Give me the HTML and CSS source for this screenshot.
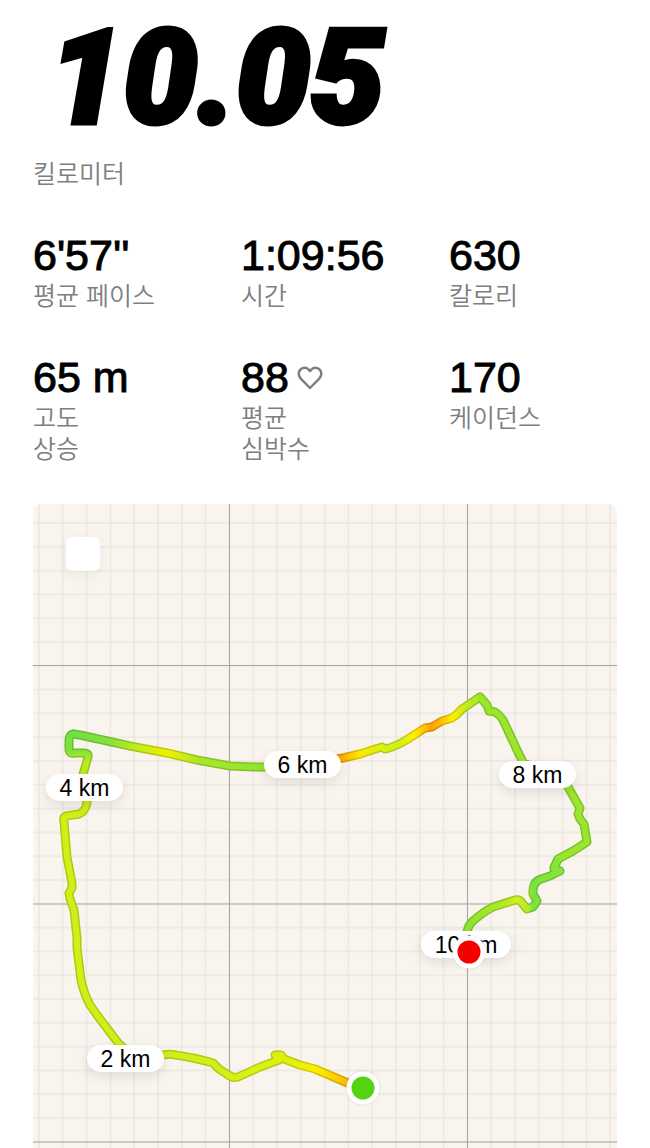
FILE: index.html
```html
<!DOCTYPE html>
<html lang="ko">

<head>
  <meta charset="UTF-8" />
  <meta name="viewport" content="width=device-width, initial-scale=1.0" />
  <title>러닝 기록</title>
  <link rel="stylesheet" href="styles.css">
</head>

<body>
  <main class="run">
    <h1 class="distance">10.05</h1>
    <p class="label">킬로미터</p>

    <dl class="stats">
      <div class="stat">
        <dd class="value">6'57''</dd>
        <dt class="label">평균 페이스</dt>
      </div>
      <div class="stat">
        <dd class="value">1:09:56</dd>
        <dt class="label">시간</dt>
      </div>
      <div class="stat">
        <dd class="value">630</dd>
        <dt class="label">칼로리</dt>
      </div>
      <div class="stat">
        <dd class="value">65 m</dd>
        <dt class="label">고도<br>상승</dt>
      </div>
      <div class="stat">
        <dd class="value">88
          <svg class="heart" viewBox="0 0 26 24" aria-hidden="true">
            <path d="M13 22 L4 12.800 C1 9.800 1 5.800 3.500 3.500 C6 1.200 9.500 1.300 11.500 3.500 L13 5 L14.500 3.500 C16.500 1.300 20 1.200 22.500 3.500 C25 5.800 25 9.800 22 12.800 Z" />
          </svg>
        </dd>
        <dt class="label">평균<br>심박수</dt>
      </div>
      <div class="stat">
        <dd class="value">170</dd>
        <dt class="label">케이던스</dt>
      </div>
    </dl>

    <section class="map">
      <button class="map-button" type="button" aria-label="지도"></button>

      <svg class="map-canvas" viewBox="33 504 584 644">
        <defs>
          <pattern id="minor" x="217.500" y="653.900" width="23.800" height="23.800" patternUnits="userSpaceOnUse">
            <path class="grid-minor" d="M0 11.900H23.800M11.900 0V23.800" />
          </pattern>
          <linearGradient id="pace-start" gradientUnits="userSpaceOnUse" x1="230" y1="0" x2="350" y2="0">
            <stop offset="0" stop-color="#d4f016" />
            <stop offset="0.450" stop-color="#dcf010" />
            <stop offset="0.730" stop-color="#fbee00" />
            <stop offset="1" stop-color="#ffb400" />
          </linearGradient>
          <linearGradient id="pace-left" gradientUnits="userSpaceOnUse" x1="0" y1="734" x2="0" y2="815">
            <stop offset="0" stop-color="#70e044" />
            <stop offset="0.200" stop-color="#82e238" />
            <stop offset="0.350" stop-color="#b8ea24" />
            <stop offset="1" stop-color="#d0ee18" />
          </linearGradient>
          <linearGradient id="pace-top" gradientUnits="userSpaceOnUse" x1="73" y1="0" x2="263" y2="0">
            <stop offset="0" stop-color="#70e044" />
            <stop offset="0.200" stop-color="#88e238" />
            <stop offset="0.340" stop-color="#c2ec1e" />
            <stop offset="0.500" stop-color="#f0f000" />
            <stop offset="0.660" stop-color="#a8e82a" />
            <stop offset="1" stop-color="#94e42e" />
          </linearGradient>
          <linearGradient id="pace-right" gradientUnits="userSpaceOnUse" x1="338" y1="0" x2="490" y2="0">
            <stop offset="0" stop-color="#ff9c00" />
            <stop offset="0.140" stop-color="#ffe800" />
            <stop offset="0.280" stop-color="#d8f014" />
            <stop offset="0.390" stop-color="#d0f018" />
            <stop offset="0.500" stop-color="#fff000" />
            <stop offset="0.610" stop-color="#ffa000" />
            <stop offset="0.660" stop-color="#ffb000" />
            <stop offset="0.750" stop-color="#fff000" />
            <stop offset="0.860" stop-color="#b8ea24" />
            <stop offset="1" stop-color="#9ae62e" />
          </linearGradient>
          <linearGradient id="pace-end" gradientUnits="userSpaceOnUse" x1="467" y1="0" x2="545" y2="0">
            <stop offset="0" stop-color="#8ee434" />
            <stop offset="0.400" stop-color="#a8e82a" />
            <stop offset="0.630" stop-color="#cdf01c" />
            <stop offset="0.780" stop-color="#b4ec28" />
            <stop offset="0.850" stop-color="#78e240" />
            <stop offset="1" stop-color="#84e43a" />
          </linearGradient>

          <g id="route">
            <path stroke="url(#pace-right)" d="M330 760 L343 758 L360 754 Q372 750 382 747 L385 749 Q395 747 408 739 L425 728 L432 727 L442 721 L452 718 Q457 715 462 709 L480 697" />
            <path stroke="#9ae62e" d="M480 697 L487 705 L489 711 L495 712 Q500 715 503 720 L517 750 L524 764 L560 772 L568 787 L580 808 L578 814 L580 819 L584 824 L587 842 L573 851 L558 859 L554 868" />
            <path stroke="url(#pace-end)" d="M467 938 Q466 927 473 921 Q483 912 493 907 L515 900 Q520 899 522 903 L527 909 L533 907 L537 901 L533 894 Q532 882 541 879 L550 876 L560 871 L554 868 L557 861" />
            <path stroke="url(#pace-top)" d="M73 734 L80 735 L130 746 L167 753 L197 760 L230 766 Q246 767 268 767" />
            <path stroke="url(#pace-left)" d="M73 734 Q69 735 69 740 L69 750 Q70 754 75 753 L84 753 Q89 753 88 757 L82 778 L87 803 Q85 812 79 814 L66 816 Q63 817 64 822 L67 857 L72 883 L72 888 L69 893 L70 899 L74 910 L77 938 L77 948 L81 980 Q84 994 90 1005 Q97 1015 103 1023 L119 1044 L140 1062" />
            <path stroke="#d0ee18" d="M140 1062 L158 1057 Q166 1053 176 1055 Q196 1058 213 1063 L219 1069 L230 1076" />
            <path stroke="url(#pace-start)" d="M228 1075 L233 1077.500 L238 1077 L260 1067 L279 1060 L275 1055 L281 1055 L284 1059 L300 1065 L315 1069 L350 1084" />
          </g>
        </defs>

        <rect x="33" y="504" width="584" height="644" fill="url(#minor)" />
        <path class="grid-major" d="M229.500 504V1148M467.500 504V1148M33 665.500H617M33 904H617M33 1142H617" />

        <use class="route-edge" href="#route" />
        <use class="route-line" href="#route" />

        <g class="marker">
          <rect x="46" y="774" width="77" height="27" rx="14" />
          <text x="84.500" y="796">4 km</text>
        </g>
        <g class="marker">
          <rect x="264" y="751" width="77" height="27" rx="14" />
          <text x="302.500" y="773">6 km</text>
        </g>
        <g class="marker">
          <rect x="499" y="761" width="77" height="27" rx="14" />
          <text x="537.500" y="783">8 km</text>
        </g>
        <g class="marker">
          <rect x="87" y="1045" width="77" height="27" rx="14" />
          <text x="125.500" y="1067">2 km</text>
        </g>
        <g class="marker">
          <rect x="421" y="931" width="90" height="27" rx="14" />
          <text x="466" y="953">10 km</text>
        </g>

        <circle class="pin pin-end" cx="469" cy="952" r="14" />
        <circle class="pin pin-start" cx="363" cy="1088" r="14" />
      </svg>
    </section>
  </main>
</body>

</html>
```

FILE: styles.css
```css
body {
  margin: 0;
  background-color: #fff;
  color: #000;
  font-family: "Liberation Sans", "Noto Sans CJK KR", sans-serif;
}

.run {
  padding: 0 33px;
}

.distance {
  margin: 0;
  padding-left: 16px;
  font-family: Roboto, sans-serif;
  font-size: 132px;
  font-style: italic;
  font-weight: 900;
  line-height: 157px;
  -webkit-text-stroke: 5px #000;
}

.label {
  margin: 0;
  color: #7e7e7e;
  font-family: "Noto Sans CJK KR", sans-serif;
  font-size: 25px;
  font-weight: 350;
  line-height: 31px;
}

.stats {
  display: grid;
  grid-template-columns: repeat(3, 1fr);
  gap: 44px 40px;
  margin: 44px 0 41px;
}

.stat {
  display: flex;
  flex-direction: column;
}

.value {
  display: flex;
  align-items: center;
  gap: 8px;
  margin: 0;
  font-size: 43px;
  line-height: 47px;
  white-space: nowrap;
  -webkit-text-stroke: 1px #000;
}

.heart {
  width: 26px;
  height: 24px;
  fill: none;
  stroke: #7e7e7e;
  stroke-width: 2.5px;
  stroke-linejoin: round;
}

.map {
  position: relative;
  overflow: hidden;
  border-radius: 8px 8px 0 0;
  background-color: #f9f5ee;
}

.map-canvas {
  display: block;
  width: 100%;
  height: auto;
}

.map-button {
  position: absolute;
  top: 33px;
  left: 33px;
  width: 34px;
  height: 34px;
  padding: 0;
  border: none;
  border-radius: 6px;
  background-color: #fff;
  box-shadow: 0 4px 14px rgba(0, 0, 0, 0.06);
  cursor: pointer;
}

.grid-minor {
  stroke: #e3e1da;
  stroke-width: 1px;
}

.grid-major {
  stroke: #a8a7a2;
  stroke-width: 1px;
}

#route {
  fill: none;
  stroke-linecap: round;
  stroke-linejoin: round;
}

.route-edge {
  stroke-width: 9px;
  filter: brightness(0.84);
}

.route-line {
  stroke-width: 6px;
}

.marker rect {
  fill: #fff;
  filter: drop-shadow(0 4px 6px rgba(0, 0, 0, 0.1));
}

.marker text {
  font-size: 23px;
  text-anchor: middle;
}

.pin {
  stroke: #fff;
  stroke-width: 5px;
  filter: drop-shadow(0 0 1px rgba(0, 0, 0, 0.15));
}

.pin-end {
  fill: #f50000;
}

.pin-start {
  fill: #52d412;
}
```
